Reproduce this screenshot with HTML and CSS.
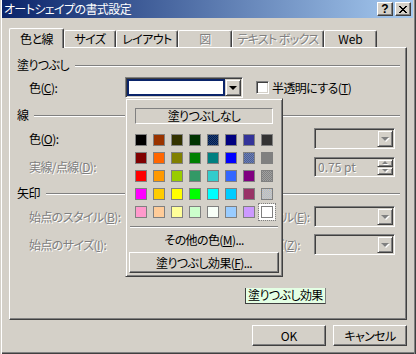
FILE: index.html
```html
<!DOCTYPE html>
<html lang="ja">
<head>
    <meta charset="UTF-8">
    <title>オートシェイプの書式設定</title>
    <link rel="stylesheet" href="styles.css">
</head>
<body>
<div class="window">
    <div class="titlebar">
        <span class="title">オートシェイプの書式設定</span>
        <div class="caption-buttons">
            <div class="cap-btn help">?</div>
            <div class="cap-btn">
                <svg width="8" height="7" viewBox="0 0 8 7" shape-rendering="crispEdges">
                    <path d="M0 0h2v1h1v1h2v-1h1v-1h2v1h-1v1h-1v1h-1v1h1v1h1v1h1v1h-2v-1h-1v-1h-2v1h-1v1h-2v-1h1v-1h1v-1h1v-1h-1v-1h-1v-1h-1z" fill="#000"/>
                </svg>
            </div>
        </div>
    </div>

    <div class="client">
        <div class="tabs">
            <div class="tab active" style="width: 55px;">色と線</div>
            <div class="tab" style="width: 52px;">サイズ</div>
            <div class="tab" style="width: 62px;">レイアウト</div>
            <div class="tab disabled" style="width: 54px;">図</div>
            <div class="tab disabled" style="width: 92px;">テキスト ボックス</div>
            <div class="tab latin" style="width: 53px;">Web</div>
        </div>

        <div class="panel">
            <div class="section first"><span>塗りつぶし</span><i class="rule"></i></div>
            <div class="fill-row">
                <span class="lbl">色(<u>C</u>):</span>
                <div class="combo focus">
                    <div class="combo-field"><span class="swatch-white"></span></div>
                    <span class="drop"><i class="arrow"></i></span>
                </div>
                <span class="check"></span>
                <span class="check-label">半透明にする(<u>T</u>)</span>
            </div>

            <div class="section line"><span>線</span><i class="rule"></i></div>
            <div class="row r-color">
                <span class="lbl">色(<u>O</u>):</span>
                <div class="combo"><div class="combo-field"></div><span class="drop"><i class="arrow"></i></span></div>
                <span class="lbl right">スタイル(<u>S</u>):</span>
                <div class="combo off"><div class="combo-field"></div><span class="drop"><i class="arrow"></i></span></div>
            </div>
            <div class="row r-dash">
                <span class="lbl off">実線/点線(<u>D</u>):</span>
                <div class="combo off"><div class="combo-field"></div><span class="drop"><i class="arrow"></i></span></div>
                <span class="lbl right off">太さ(<u>W</u>):</span>
                <div class="spin">
                    <span class="spin-value">0.75 pt</span>
                    <span class="spin-btns">
                        <span class="spin-btn"><i class="arrow up"></i></span>
                        <span class="spin-btn"><i class="arrow small"></i></span>
                    </span>
                </div>
            </div>

            <div class="section arrowhead"><span>矢印</span><i class="rule"></i></div>
            <div class="row r-begin">
                <span class="lbl off">始点のスタイル(<u>B</u>):</span>
                <div class="combo off"><div class="combo-field"></div><span class="drop"><i class="arrow"></i></span></div>
                <span class="lbl right off">終点のスタイル(<u>E</u>):</span>
                <div class="combo off"><div class="combo-field"></div><span class="drop"><i class="arrow"></i></span></div>
            </div>
            <div class="row r-size">
                <span class="lbl off">始点のサイズ(<u>I</u>):</span>
                <div class="combo off"><div class="combo-field"></div><span class="drop"><i class="arrow"></i></span></div>
                <span class="lbl right off">終点のサイズ(<u>Z</u>):</span>
                <div class="combo off"><div class="combo-field"></div><span class="drop"><i class="arrow"></i></span></div>
            </div>
        </div>

        <div class="actions">
            <div class="btn latin">OK</div>
            <div class="btn">キャンセル</div>
        </div>
    </div>

    <!-- 色のドロップダウン -->
    <div class="popup">
        <div class="none-btn">塗りつぶしなし</div>
        <div class="swatches" id="swatches"></div>
        <div class="sep"></div>
        <div class="more">その他の色(<u>M</u>)...</div>
        <div class="btn effect-btn">塗りつぶし効果(<u>F</u>)...</div>
    </div>

    <div class="tooltip">塗りつぶし効果</div>
</div>

<script>
    const colors = [
        '#000000', '#993300', '#333300', '#003300', 'dither-navy', '#000080', '#333399', '#333333',
        '#800000', '#FF6600', '#808000', '#008000', '#008080', '#0000FF', 'dither-slate', '#808080',
        '#FF0000', '#FF9900', '#99CC00', '#339966', '#33CCCC', '#3366FF', '#800080', 'dither-gray',
        '#FF00FF', '#FFCC00', '#FFFF00', '#00FF00', '#00FFFF', '#00CCFF', '#993366', 'dither-silver',
        '#FF99CC', '#FFCC99', '#FFFF99', '#CCFFCC', '#F8FFF8', '#99CCFF', '#CC99FF', '#FFFFFF'
    ];

    const swatches = document.getElementById('swatches');
    let html = '';
    colors.forEach((c, i) => {
        const selected = i === colors.length - 1 ? ' selected' : '';
        if (c.startsWith('dither')) {
            html += `<span class="sw ${c}${selected}"></span>`;
        } else {
            html += `<span class="sw${selected}" style="background: ${c};"></span>`;
        }
    });
    swatches.innerHTML = html;
</script>
</body>
</html>
```

FILE: styles.css
```css
* {
    margin: 0;
    padding: 0;
    box-sizing: border-box;
}

body {
    font-family: "Noto Sans CJK JP", "Liberation Sans", sans-serif;
    font-size: 12px;
    line-height: 14px;
    font-feature-settings: "palt";
    letter-spacing: -0.6px;
    background: #d4d0c8;
    color: #000;
    white-space: nowrap;
}

.latin {
    letter-spacing: 0;
}

u {
    text-decoration: underline;
    text-underline-offset: 1px;
}

.window {
    position: relative;
    width: 416px;
    height: 354px;
    padding: 0 3px 2px 2px;
    background: #d4d0c8;
    box-shadow: inset 1px 0 #d4d0c8, inset 2px 0 #fff,
                inset -1px 0 #404040, inset -2px 0 #808080,
                inset 0 -1px #404040, inset 0 -2px #808080;
}

/* タイトルバー */
.titlebar {
    height: 18px;
    display: flex;
    align-items: center;
    justify-content: space-between;
    padding: 0 2px;
    background: linear-gradient(to right, #0a246a, #a6caf0);
    color: #fff;
}

.caption-buttons {
    display: flex;
    gap: 2px;
}

.cap-btn {
    width: 16px;
    height: 14px;
    display: flex;
    align-items: center;
    justify-content: center;
    background: #d4d0c8;
    border: 1px solid;
    border-color: #fff #404040 #404040 #fff;
    box-shadow: inset -1px -1px #808080;
    color: #000;
}

.cap-btn.help {
    font-family: "Liberation Sans", sans-serif;
    font-weight: bold;
    font-size: 12px;
    letter-spacing: 0;
}

.client {
    padding: 10px 6px 0 7px;
}

/* タブ */
.tabs {
    display: flex;
    align-items: flex-end;
    height: 19px;
}

.tab {
    height: 17px;
    padding-top: 1px;
    text-align: center;
    line-height: 14px;
    border: 1px solid;
    border-bottom: none;
    border-color: #fff #404040 #404040 #fff;
    border-radius: 2px 2px 0 0;
    box-shadow: inset -1px 0 #808080;
}

.tab.active {
    height: 20px;
    margin-bottom: -1px;
    padding-top: 3px;
    position: relative;
    z-index: 1;
    background: #d4d0c8;
}

.tab.disabled,
.off {
    color: #808080;
    text-shadow: 1px 1px 0 #fff;
}

/* パネル */
.panel {
    height: 273px;
    padding: 10px 6px 0 7px;
    border: 1px solid;
    border-color: #fff #404040 #404040 #fff;
    box-shadow: inset -1px -1px #808080;
}

.section {
    display: flex;
    align-items: center;
    height: 14px;
}

.section.line { margin-top: 10px; }
.section.arrowhead { margin-top: 9px; }

.rule {
    flex: 1;
    margin-left: 6px;
    margin-top: 1px;
    border-top: 1px solid #808080;
    border-bottom: 1px solid #fff;
}

.fill-row {
    display: flex;
    align-items: center;
    height: 21px;
    margin-top: 5px;
    padding-left: 12px;
}

.fill-row .lbl {
    width: 96px;
}

.fill-row .combo {
    width: 118px;
}

.row {
    display: grid;
    grid-template-columns: 96px 90px 99px 81px;
    align-items: center;
    height: 21px;
    padding-left: 12px;
}

.r-color { margin-top: 6px; }
.r-dash { margin-top: 7px; }
.r-begin { margin-top: 6px; }
.r-size { margin-top: 7px; }

.lbl.right {
    padding-left: 4px;
}

/* コンボボックス */
.combo {
    height: 21px;
    display: flex;
    padding: 1px;
    border: 1px solid;
    border-color: #808080 #fff #fff #808080;
    box-shadow: inset 1px 1px #404040, inset -1px -1px #d4d0c8;
    background: #fff;
}

.combo.off {
    background: #d4d0c8;
}

.combo-field {
    flex: 1;
}

.combo.focus .combo-field {
    background: #0a246a;
    padding: 2px;
}

.swatch-white {
    display: block;
    height: 100%;
    background: #fff;
}

.drop {
    width: 16px;
    display: flex;
    align-items: center;
    justify-content: center;
    background: #d4d0c8;
    border: 1px solid;
    border-color: #d4d0c8 #404040 #404040 #d4d0c8;
    box-shadow: inset 1px 1px #fff, inset -1px -1px #808080;
}

.arrow {
    width: 0;
    height: 0;
    border-left: 4px solid transparent;
    border-right: 4px solid transparent;
    border-top: 4px solid #000;
}

.combo.off .arrow,
.spin .arrow {
    border-top-color: #808080;
    filter: drop-shadow(1px 1px 0 #fff);
}

.arrow.small {
    border-left-width: 3px;
    border-right-width: 3px;
    border-top-width: 3px;
}

.arrow.up {
    border-left-width: 3px;
    border-right-width: 3px;
    border-top: none;
    border-bottom: 3px solid #808080;
}

.check {
    width: 13px;
    height: 13px;
    margin-left: 13px;
    background: #fff;
    border: 1px solid;
    border-color: #808080 #fff #fff #808080;
    box-shadow: inset 1px 1px #404040, inset -1px -1px #d4d0c8;
}

.check-label {
    margin-left: 3px;
}

/* スピンボックス */
.spin {
    height: 20px;
    display: flex;
    align-items: stretch;
    padding: 1px;
    border: 1px solid;
    border-color: #808080 #fff #fff #808080;
    box-shadow: inset 1px 1px #404040, inset -1px -1px #d4d0c8;
}

.spin-value {
    flex: 1;
    padding-left: 2px;
    line-height: 16px;
    letter-spacing: 0;
    color: #808080;
    text-shadow: 1px 1px 0 #fff;
}

.spin-btns {
    width: 16px;
    display: flex;
    flex-direction: column;
}

.spin-btn {
    flex: 1;
    display: flex;
    align-items: center;
    justify-content: center;
    border: 1px solid;
    border-color: #d4d0c8 #404040 #404040 #d4d0c8;
    box-shadow: inset 1px 1px #fff, inset -1px -1px #808080;
}

/* ボタン */
.actions {
    display: flex;
    justify-content: flex-end;
    gap: 7px;
    margin-top: 5px;
}

.btn {
    width: 74px;
    height: 21px;
    display: flex;
    align-items: center;
    justify-content: center;
    background: #d4d0c8;
    border: 1px solid;
    border-color: #fff #404040 #404040 #fff;
    box-shadow: inset -1px -1px #808080;
}

/* ドロップダウン */
.popup {
    position: absolute;
    left: 125px;
    top: 98px;
    width: 158px;
    height: 179px;
    padding: 9px 3px 3px;
    background: #d4d0c8;
    border: 1px solid;
    border-color: #d4d0c8 #404040 #404040 #d4d0c8;
    box-shadow: inset 1px 1px #fff, inset -1px -1px #808080;
}

.none-btn {
    height: 16px;
    margin: 0 6px;
    text-align: center;
    line-height: 14px;
    border: 1px solid;
    border-color: #808080 #fff #fff #808080;
}

.swatches {
    display: grid;
    grid-template-columns: repeat(8, 12px);
    grid-auto-rows: 12px;
    gap: 6px;
    margin: 10px 6px 0;
}

.sw {
    border: 1px solid #808080;
}

.sw.selected {
    box-shadow: 0 0 0 2px #fff;
    outline: 1px dotted #808080;
    outline-offset: 2px;
}

.dither-navy { background: repeating-conic-gradient(#001a4d 0 25%, #1f3f73 0 50%) 0 0 / 2px 2px; }
.dither-slate { background: repeating-conic-gradient(#4a5f99 0 25%, #7080b0 0 50%) 0 0 / 2px 2px; }
.dither-gray { background: repeating-conic-gradient(#808080 0 25%, #a0a0a0 0 50%) 0 0 / 2px 2px; }
.dither-silver { background: repeating-conic-gradient(#a8bcd8 0 25%, #d8c8b0 0 50%) 0 0 / 2px 2px; }

.sep {
    margin: 8px 1px 0;
    border-top: 1px solid #808080;
    border-bottom: 1px solid #fff;
}

.more {
    margin-top: 5px;
    text-align: center;
}

.effect-btn {
    width: auto;
    height: 21px;
    margin-top: 5px;
}

.tooltip {
    position: absolute;
    left: 245px;
    top: 288px;
    height: 16px;
    padding: 0 2px;
    line-height: 14px;
    background: #e4ffe4;
    border-left: 1px solid #404040;
    border-bottom: 1px solid #404040;
    border-right: 1px solid #808080;
}
```
